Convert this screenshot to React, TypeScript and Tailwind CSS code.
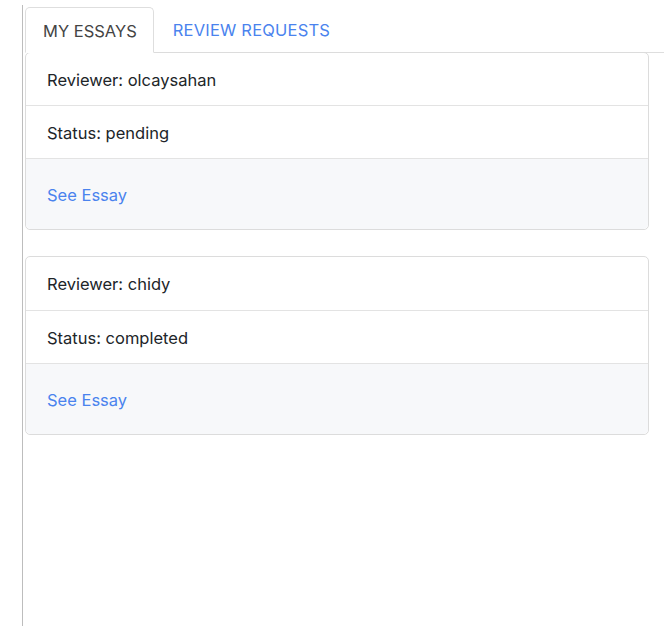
import React from "react";

const ESSAYS = [
  { reviewer: "olcaysahan", status: "pending" },
  { reviewer: "chidy", status: "completed" },
];

export default function App() {
  return (
    <div className="h-[626px] w-[672px] bg-white pl-[22px] pt-[5px] font-['Inter','Liberation_Sans',sans-serif] text-[16.5px] text-[#212529]">
      <div className="h-full border-l border-[#bdbdbd] pl-[2px] pt-[2px]">
        {/* Tabs */}
        <div className="flex w-[639px] border-b border-[#dedede]">
          <div className="-mb-px flex h-[46px] items-center rounded-t-[5px] border border-[#dedede] border-b-white bg-white pl-[17px] pr-[16px] pt-[2px] text-[#444]">
            MY ESSAYS
          </div>
          <div className="flex h-[45px] items-center pl-[19px] pt-[2px] tracking-[0.2px] text-[#4a83ee]">REVIEW REQUESTS</div>
        </div>

        {/* Essays */}
        {ESSAYS.map((e, i) => (
          <div
            key={e.reviewer}
            className={`w-[624px] rounded-[5px] border border-[#dcdcdc] ${i === 0 ? "-mt-px" : "mt-[26px]"}`}
          >
            <div className={`flex items-center border-b border-[#e3e3e3] pl-[21px] pt-[2px] ${i === 0 ? "h-[53px]" : "h-[54px]"}`}>
              Reviewer: {e.reviewer}
            </div>
            <div className="flex h-[53px] items-center border-b border-[#e3e3e3] pl-[21px] pt-[2px]">
              Status: {e.status}
            </div>
            <div className="flex h-[70px] items-center rounded-b-[5px] bg-[#f7f8fa] pl-[21px] pt-[2px] text-[#4a83ee]">
              See Essay
            </div>
          </div>
        ))}
      </div>
    </div>
  );
}
